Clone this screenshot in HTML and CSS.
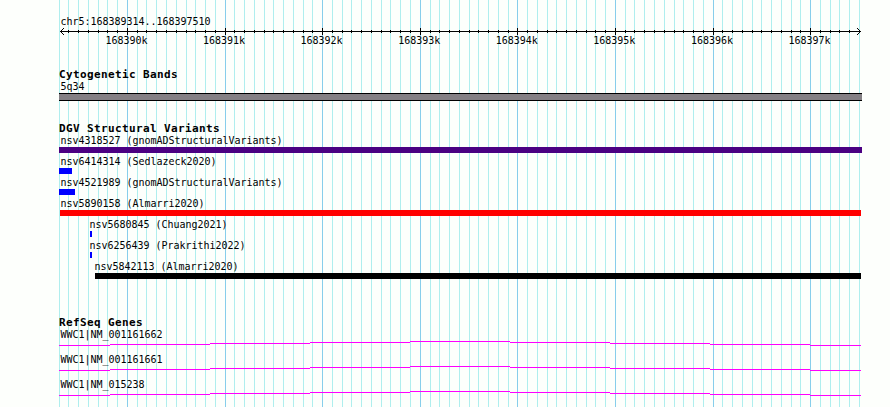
FILE: index.html
```html
<!DOCTYPE html>
<html lang="en">
<head>
<meta charset="utf-8">
<title>chr5:168389314..168397510</title>
<link rel="stylesheet" href="styles.css">
</head>
<body>
<main class="browser">
  <svg class="grid" width="890" height="407" shape-rendering="crispEdges" aria-hidden="true"><path id="minor" class="minor"/><path id="major" class="major"/></svg>
  <section class="ruler">
    <div class="label">chr5:168389314..168397510</div>
    <svg class="axis" width="803" height="7" shape-rendering="crispEdges" aria-hidden="true">
      <path d="M1 3h801v1H1z"/><path id="ticks"/>
      <path d="M2 2h1v1h-1zM3 1h1v1h-1zM4 0h1v1h-1zM2 4h1v1h-1zM3 5h1v1h-1zM4 6h1v1h-1zM800 2h1v1h-1zM799 1h1v1h-1zM798 0h1v1h-1zM800 4h1v1h-1zM799 5h1v1h-1zM798 6h1v1h-1z"/>
    </svg>
    <div class="scale"><span class="label">168390k</span><span class="label">168391k</span><span class="label">168392k</span><span class="label">168393k</span><span class="label">168394k</span><span class="label">168395k</span><span class="label">168396k</span><span class="label">168397k</span></div>
  </section>
  <section class="cyto">
    <h2>Cytogenetic Bands</h2>
    <div class="label">5q34</div>
    <div class="band"></div>
  </section>
  <section class="variants">
    <h2>DGV Structural Variants</h2>
    <div class="variant"><div class="label">nsv4318527 (gnomADStructuralVariants)</div><div class="bar purple"></div></div>
    <div class="variant"><div class="label">nsv6414314 (Sedlazeck2020)</div><div class="bar blue w13"></div></div>
    <div class="variant"><div class="label">nsv4521989 (gnomADStructuralVariants)</div><div class="bar blue w16"></div></div>
    <div class="variant"><div class="label">nsv5890158 (Almarri2020)</div><div class="bar red"></div></div>
    <div class="variant indent"><div class="label">nsv5680845 (Chuang2021)</div><div class="bar blue dot"></div></div>
    <div class="variant indent"><div class="label">nsv6256439 (Prakrithi2022)</div><div class="bar blue dot"></div></div>
    <div class="variant indent2"><div class="label">nsv5842113 (Almarri2020)</div><div class="bar black"></div></div>
  </section>
  <section class="genes">
    <h2>RefSeq Genes</h2>
    <div class="gene"><div class="label">WWC1|NM_001161662</div><svg class="intron" width="802" height="5" shape-rendering="crispEdges"><path d="M0 4h51v1H0zM51 3h100v1H51zM151 2h100v1H151zM251 1h100v1H251zM351 0h100v1H351zM451 1h100v1H451zM551 2h100v1H551zM651 3h100v1H651zM751 4h51v1H751z"/></svg></div>
    <div class="gene"><div class="label">WWC1|NM_001161661</div><svg class="intron" width="802" height="5" shape-rendering="crispEdges"><path d="M0 4h51v1H0zM51 3h100v1H51zM151 2h100v1H151zM251 1h100v1H251zM351 0h100v1H351zM451 1h100v1H451zM551 2h100v1H551zM651 3h100v1H651zM751 4h51v1H751z"/></svg></div>
    <div class="gene"><div class="label">WWC1|NM_015238</div><svg class="intron" width="802" height="5" shape-rendering="crispEdges"><path d="M0 4h51v1H0zM51 3h100v1H51zM151 2h100v1H151zM251 1h100v1H251zM351 0h100v1H351zM451 1h100v1H451zM551 2h100v1H551zM651 3h100v1H651zM751 4h51v1H751z"/></svg></div>
  </section>
</main>
<script src="grid.js"></script>
</body>
</html>
```
FILE: styles.css
```css
body { margin: 0; background: #fdfffc; color: #000; }
.browser { position: relative; box-sizing: border-box; width: 890px; height: 407px; padding: 15px 28px 0 59px; overflow: hidden; }
.grid { position: absolute; left: 0; top: 0; z-index: -1; }
.minor { fill: #afeeee; }
.major { fill: #87ceeb; }
.label { height: 12px; padding-left: 1px; font: 10px/12px "DejaVu Sans Mono", monospace; letter-spacing: -0.02px; white-space: pre; transform: translate(0.4px, 1px) scaleY(1.1); transform-origin: 0 10px; }
h2 { margin: 0; height: 12px; font: bold 11px/12px "DejaVu Sans Mono", monospace; letter-spacing: 0.378px; white-space: pre; transform: translateY(1px); }
.ruler { height: 53px; }
.axis { display: block; margin-top: 1px; }
.scale { display: flex; gap: 55.6px; padding-left: 46px; margin-top: -1px; }
.scale .label { width: 42px; padding: 0; }
.cyto { height: 54px; }
.cyto .label { height: 13px; }
.band { width: 803px; height: 8px; box-sizing: border-box; background: #848084; border: solid #000; border-width: 1px 0; }
.variants { height: 194px; }
.variant { height: 21px; }
.bar { width: 803px; height: 6px; margin-top: 1px; }
.purple { background: #4b0082; }
.blue { background: #00f; }
.red { width: 801px; margin-left: 1px; background: #f00; }
.black { width: 766px; background: #000; }
.w13 { width: 13px; }
.w16 { width: 16px; }
.indent { padding-left: 30px; }
.indent2 { padding-left: 36px; }
.indent .label, .indent2 .label { padding-left: 0; }
.indent2 .label { margin-left: -1px; }
.dot { width: 2px; margin-left: 1px; }
.gene { height: 25px; }
.intron { display: block; margin-top: 1px; fill: #f0f; }
```
FILE: grid.js
```js
// 1 bp = 0.0976 px; lines every 100 bp, major lines every 1000 bp
let minor = "", major = "", ticks = "";
for (let bp = 168389300; bp <= 168397500; bp += 100) {
  const x = Math.round(60 + (bp - 168389314) * 0.0976);
  const isMajor = bp % 1000 === 0;
  const line = `M${x} 0h1v407h-1z`;
  if (isMajor) major += line; else minor += line;
  if (x > 60 && x < 858) ticks += isMajor ? `M${x - 59} 0h1v7h-1z` : `M${x - 59} 2h1v3h-1z`;
}
document.getElementById("minor").setAttribute("d", minor);
document.getElementById("major").setAttribute("d", major);
document.getElementById("ticks").setAttribute("d", ticks);
```
